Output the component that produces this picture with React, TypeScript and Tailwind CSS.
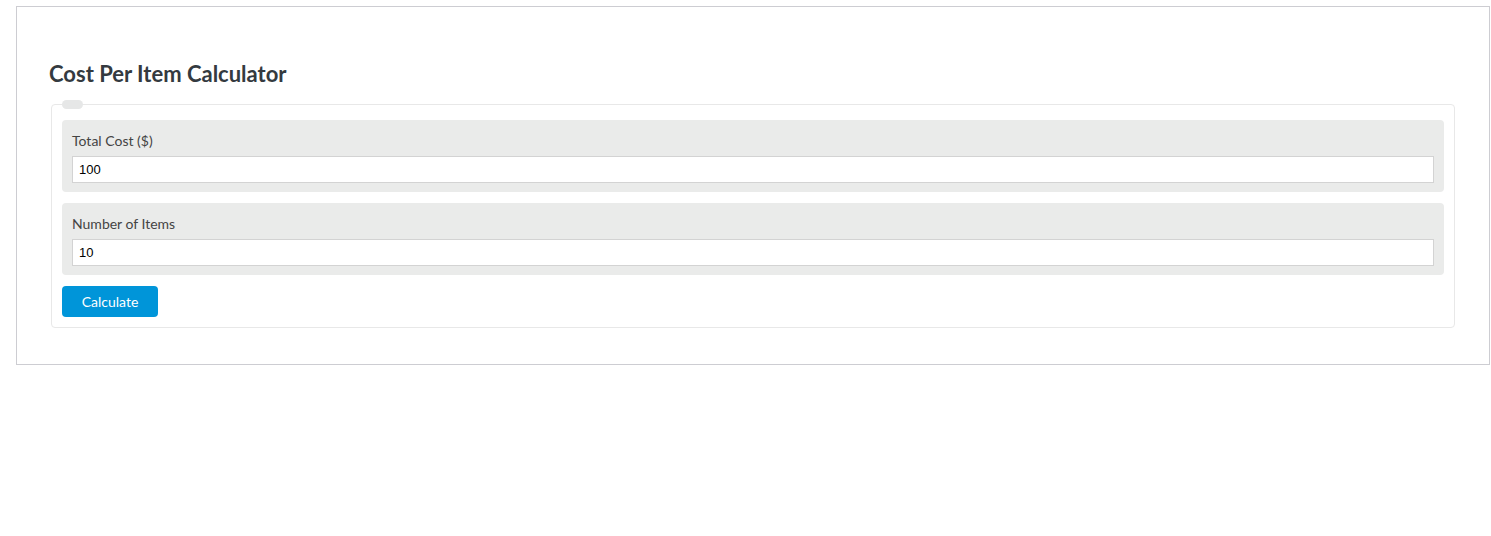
import React from "react";

export default function App() {
  return (
    <div className="bg-white w-full min-h-[536px] pt-[6px] pl-[16px] pr-[1px]" style={{ fontFamily: "Lato, 'Open Sans', sans-serif" }}>
      <div className="border border-[#cdcdd2] px-[34px] pt-[53px] pb-[36px]">
        <h2 className="ml-[-2px] text-[22px] leading-[28px] font-bold text-[#343a40] font-['Lato',sans-serif]">Cost Per Item Calculator</h2>
        <div className="relative mt-[16px] border border-[#e8e8e8] rounded-[4px] px-[10px] pt-[15px] pb-[10px]">
          <div className="absolute left-[10px] top-[-5px] w-[21px] h-[9px] rounded-full bg-[#e6e7e7]" />
          <div className="flex flex-col gap-[11px]">
            <div className="bg-[#eaebea] rounded-[4px] px-[10px] pt-[11px] pb-[9px]">
              <div className="text-[14px] leading-[20px] text-[#444]">Total Cost ($)</div>
              <div className="mt-[5px] h-[27px] border border-[#d3d3d3] bg-white flex items-center px-[6px] text-[13px] text-[#000] font-['Liberation_Sans',Arial,sans-serif]">100</div>
            </div>
            <div className="bg-[#eaebea] rounded-[4px] px-[10px] pt-[11px] pb-[9px]">
              <div className="text-[14px] leading-[20px] text-[#444]">Number of Items</div>
              <div className="mt-[5px] h-[27px] border border-[#d3d3d3] bg-white flex items-center px-[6px] text-[13px] text-[#000] font-['Liberation_Sans',Arial,sans-serif]">10</div>
            </div>
            <div className="flex">
              <button className="w-[96px] h-[31px] rounded-[4px] bg-[#0095d9] text-white text-[14px]">Calculate</button>
            </div>
          </div>
        </div>
      </div>
    </div>
  );
}
